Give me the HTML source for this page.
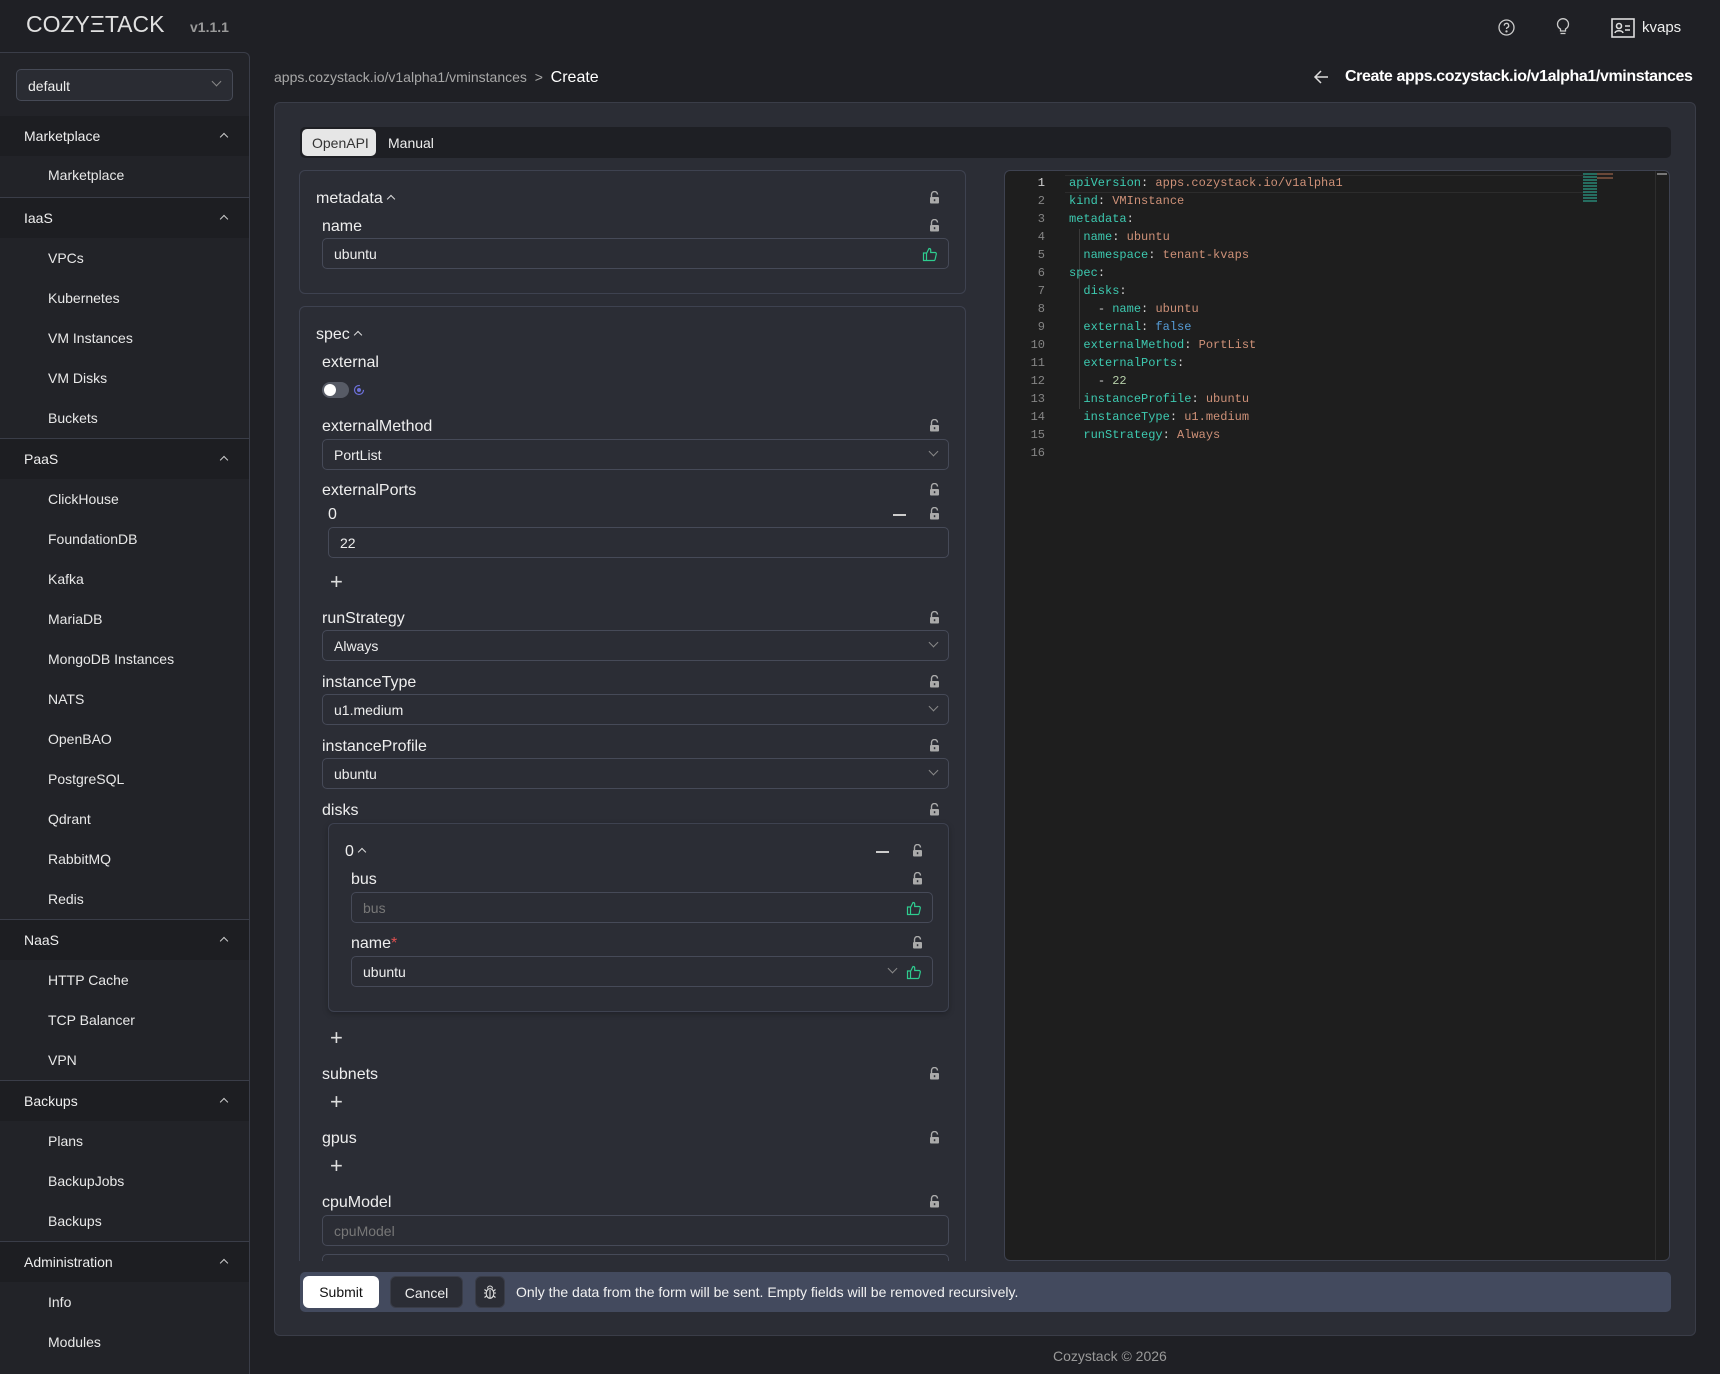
<!DOCTYPE html>
<html><head><meta charset="utf-8">
<style>
*{box-sizing:border-box;margin:0;padding:0}
html,body{width:1720px;height:1374px;overflow:hidden;background:#1f2025;font-family:"Liberation Sans",sans-serif;color:#e6e6e6}
.a{position:absolute}
.logo{left:26px;top:11px;font-size:23px;letter-spacing:0;color:#e0e0e0;font-weight:300}
.ver{left:190px;top:19px;font-size:14px;font-weight:bold;color:#9a9a9a}
.side{left:0;top:52px;width:250px;height:1322px;background:#222328;border-right:1px solid #3a3d48;border-top:1px solid #3a3d48;border-top-right-radius:6px}
.sel{left:16px;top:16px;width:217px;height:32px;border:1px solid #464a56;border-radius:5px;background:#2a2c33;font-size:14px;padding:8px 11px;color:#eee}
.gh{position:absolute;left:0;width:249px;height:40px;background:#1d1e22;font-size:14px;padding:12px 24px;color:#eee}
.gh:after{content:"";position:absolute;right:22px;top:18px;width:5px;height:5px;border-left:1.3px solid #ccc;border-top:1.3px solid #ccc;transform:rotate(45deg)}
.it{position:absolute;left:48px;font-size:14px;color:#e8e8e8}
.sep{position:absolute;left:0;width:249px;height:1px;background:#3a3d48}
.card{left:274px;top:102px;width:1422px;height:1234px;background:#2b2d35;border:1px solid #3a3d48;border-radius:6px}
.tabs{left:300px;top:127px;width:1371px;height:31px;background:#1e1f24;border-radius:5px}
.box{position:absolute;border:1px solid #3e4250;border-radius:6px;background:#2b2d35}
.lb{position:absolute;font-size:16px;color:#eee}
.up{display:inline-block;width:6px;height:6px;border-left:1.2px solid #ddd;border-top:1.2px solid #ddd;transform:rotate(45deg);margin-left:5px;vertical-align:1px}
.inp{position:absolute;height:31px;border:1px solid #464a58;border-radius:5px;background:#2b2d35;font-size:14px;padding:7px 11px;color:#eee}
.ph{color:#777}
.chev{position:absolute;right:11px;top:8px;width:7px;height:7px;border-right:1px solid #888;border-bottom:1px solid #888;transform:rotate(45deg)}
.lock{position:absolute;width:11px;height:13px}
.plus{position:absolute;font-size:22px;color:#ddd;font-weight:300}
.ed{left:1004px;top:170px;width:666px;height:1091px;background:#1e1e1e;border:1px solid #3e4250;border-radius:6px;overflow:hidden}
.code{position:absolute;left:0;top:3px;font-family:"Liberation Mono",monospace;font-size:12px;line-height:18px;white-space:pre}
.ln{position:absolute;left:0;width:40px;text-align:right;color:#858585}
.k{color:#3dc9b0}.s{color:#ce9178}.b{color:#569cd6}.n{color:#b5cea8}.p{color:#d4d4d4}
.bar{left:300px;top:1272px;width:1371px;height:40px;background:#434a5e;border-radius:5px}
.btn{position:absolute;top:4px;height:32px;border-radius:6px;font-size:14px;text-align:center;padding-top:8px}
</style></head><body>
<div class="a logo">COZY<span>Ξ</span>TACK</div>
<div class="a ver">v1.1.1</div>
<svg class="a" style="left:1498px;top:19px" width="17" height="17" viewBox="0 0 17 17" fill="none" stroke="#ccc" stroke-width="1.3"><circle cx="8.5" cy="8.5" r="7.5"/><path d="M6.3 6.6a2.2 2.2 0 1 1 3 2c-.6.3-.8.7-.8 1.4"/><circle cx="8.5" cy="12.4" r=".5" fill="#ccc"/></svg>
<svg class="a" style="left:1556px;top:18px" width="14" height="19" viewBox="0 0 14 19" fill="none" stroke="#ccc" stroke-width="1.3"><path d="M4.5 13v-2C2.5 9.8 1.5 8 1.5 6.2a5.5 5.5 0 0 1 11 0c0 1.8-1 3.6-3 4.8v2zM4.5 15.5h5"/></svg>
<svg class="a" style="left:1611px;top:18px" width="24" height="20" viewBox="0 0 24 20" fill="none" stroke="#ddd" stroke-width="1.6"><rect x="1" y="1" width="22" height="18"/><circle cx="8" cy="8" r="2.5"/><path d="M4 15c.5-3 7.5-3 8 0M14 8h5M14 12h5"/></svg>
<div class="a" style="left:1642px;top:19px;font-size:15px;color:#eee">kvaps</div>

<div class="a side">
<div class="a sel">default<span class="chev" style="top:8px;right:12px"></span></div>
<div class="gh" style="top:63px">Marketplace</div>
<div class="it" style="top:114px">Marketplace</div>
<div class="sep" style="top:144px"></div>
<div class="gh" style="top:145px">IaaS</div>
<div class="it" style="top:197px">VPCs</div>
<div class="it" style="top:237px">Kubernetes</div>
<div class="it" style="top:277px">VM Instances</div>
<div class="it" style="top:317px">VM Disks</div>
<div class="it" style="top:357px">Buckets</div>
<div class="sep" style="top:385px"></div>
<div class="gh" style="top:386px">PaaS</div>
<div class="it" style="top:438px">ClickHouse</div>
<div class="it" style="top:478px">FoundationDB</div>
<div class="it" style="top:518px">Kafka</div>
<div class="it" style="top:558px">MariaDB</div>
<div class="it" style="top:598px">MongoDB Instances</div>
<div class="it" style="top:638px">NATS</div>
<div class="it" style="top:678px">OpenBAO</div>
<div class="it" style="top:718px">PostgreSQL</div>
<div class="it" style="top:758px">Qdrant</div>
<div class="it" style="top:798px">RabbitMQ</div>
<div class="it" style="top:838px">Redis</div>
<div class="sep" style="top:866px"></div>
<div class="gh" style="top:867px">NaaS</div>
<div class="it" style="top:919px">HTTP Cache</div>
<div class="it" style="top:959px">TCP Balancer</div>
<div class="it" style="top:999px">VPN</div>
<div class="sep" style="top:1027px"></div>
<div class="gh" style="top:1028px">Backups</div>
<div class="it" style="top:1080px">Plans</div>
<div class="it" style="top:1120px">BackupJobs</div>
<div class="it" style="top:1160px">Backups</div>
<div class="sep" style="top:1188px"></div>
<div class="gh" style="top:1189px">Administration</div>
<div class="it" style="top:1241px">Info</div>
<div class="it" style="top:1281px">Modules</div>
</div>

<div class="a" style="left:274px;top:69px;font-size:14px;color:#a8a8a8">apps.cozystack.io/v1alpha1/vminstances&nbsp;&nbsp;&gt;&nbsp;&nbsp;<span style="color:#fff;font-size:16px">Create</span></div>
<svg class="a" style="left:1313px;top:69px" width="16" height="16" viewBox="0 0 16 16" fill="none" stroke="#ddd" stroke-width="1.5"><path d="M15 8H2M8 2L2 8l6 6"/></svg>
<div class="a" style="left:1345px;top:68px;font-size:16px;font-weight:bold;color:#fff;letter-spacing:-0.4px">Create apps.cozystack.io/v1alpha1/vminstances</div>

<div class="a card"></div>
<div class="a tabs">
<div class="a" style="left:2px;top:2px;width:74px;height:27px;background:#e6e6e6;border-radius:5px;color:#333;font-size:14px;padding:6px 0 0 10px">OpenAPI</div>
<div class="a" style="left:88px;top:8px;font-size:14px;color:#eee">Manual</div>
</div>

<svg width="0" height="0" style="position:absolute"><defs>
<symbol id="lk" viewBox="0 0 11 13"><path d="M2.5 6V3.5a3 3 0 0 1 6 0" fill="none" stroke="#aaa" stroke-width="1.4"/><rect x="1" y="6" width="9" height="6.5" rx="1" fill="#aaa"/><rect x="4.8" y="8.2" width="1.5" height="2" fill="#2b2d35"/></symbol>
<symbol id="th" viewBox="0 0 16 16"><path d="M1.5 7h3v7.5h-3zM4.5 7.5L7 2.5c1 0 1.7.6 1.7 1.6V6.5h4.3c.9 0 1.5.8 1.3 1.6l-1.2 5.3c-.2.7-.7 1.1-1.4 1.1H4.5" fill="none" stroke="#2ecc8f" stroke-width="1.2"/></symbol>
</defs></svg>

<div class="a" style="left:299px;top:170px;width:668px;height:1091px;overflow:hidden">
<div class="box" style="left:0;top:0;width:667px;height:124px"></div>
<div class="box" style="left:0;top:136px;width:667px;height:1000px"></div>
</div>
<div class="a" style="left:0;top:0;width:1720px;height:1261px;overflow:hidden;pointer-events:none">
<div class="lb" style="left:316px;top:190px">metadata<span class="up"></span></div>
<svg class="lock" style="left:929px;top:191px"><use href="#lk"/></svg>
<div class="lb" style="left:322px;top:218px">name</div>
<svg class="lock" style="left:929px;top:219px"><use href="#lk"/></svg>
<div class="inp" style="left:322px;top:238px;width:627px">ubuntu<svg class="a" style="right:10px;top:7px" width="16" height="16"><use href="#th"/></svg></div>

<div class="lb" style="left:316px;top:326px">spec<span class="up"></span></div>
<div class="lb" style="left:322px;top:354px">external</div>
<div class="a" style="left:322px;top:382px;width:27px;height:16px;border-radius:8px;background:#575b66"></div>
<div class="a" style="left:324px;top:384px;width:12px;height:12px;border-radius:6px;background:#fff"></div>
<svg class="a" style="left:353px;top:384px" width="12" height="12"><circle cx="6" cy="6" r="4.5" fill="none" stroke="#6c6fd8" stroke-width="1.2" stroke-dasharray="22 6"/><circle cx="6" cy="6" r="2" fill="#6c6fd8"/></svg>

<div class="lb" style="left:322px;top:418px">externalMethod</div>
<svg class="lock" style="left:929px;top:419px"><use href="#lk"/></svg>
<div class="inp" style="left:322px;top:439px;width:627px">PortList<span class="chev"></span></div>
<div class="lb" style="left:322px;top:482px">externalPorts</div>
<svg class="lock" style="left:929px;top:483px"><use href="#lk"/></svg>
<div class="lb" style="left:328px;top:506px">0</div>
<div class="a" style="left:893px;top:514px;width:13px;height:1.5px;background:#ccc"></div>
<svg class="lock" style="left:929px;top:507px"><use href="#lk"/></svg>
<div class="inp" style="left:328px;top:527px;width:621px">22</div>
<div class="plus" style="left:330px;top:569px">+</div>

<div class="lb" style="left:322px;top:610px">runStrategy</div>
<svg class="lock" style="left:929px;top:611px"><use href="#lk"/></svg>
<div class="inp" style="left:322px;top:630px;width:627px">Always<span class="chev"></span></div>
<div class="lb" style="left:322px;top:674px">instanceType</div>
<svg class="lock" style="left:929px;top:675px"><use href="#lk"/></svg>
<div class="inp" style="left:322px;top:694px;width:627px">u1.medium<span class="chev"></span></div>
<div class="lb" style="left:322px;top:738px">instanceProfile</div>
<svg class="lock" style="left:929px;top:739px"><use href="#lk"/></svg>
<div class="inp" style="left:322px;top:758px;width:627px">ubuntu<span class="chev"></span></div>
<div class="lb" style="left:322px;top:802px">disks</div>
<svg class="lock" style="left:929px;top:803px"><use href="#lk"/></svg>
<div class="box" style="left:328px;top:823px;width:621px;height:189px;box-shadow:0 2px 6px rgba(0,0,0,.25)"></div>
<div class="lb" style="left:345px;top:843px">0<span class="up"></span></div>
<div class="a" style="left:876px;top:851px;width:13px;height:1.5px;background:#ccc"></div>
<svg class="lock" style="left:912px;top:844px"><use href="#lk"/></svg>
<div class="lb" style="left:351px;top:871px">bus</div>
<svg class="lock" style="left:912px;top:872px"><use href="#lk"/></svg>
<div class="inp" style="left:351px;top:892px;width:582px"><span class="ph">bus</span><svg class="a" style="right:10px;top:7px" width="16" height="16"><use href="#th"/></svg></div>
<div class="lb" style="left:351px;top:935px">name<span style="color:#e05050">*</span></div>
<svg class="lock" style="left:912px;top:936px"><use href="#lk"/></svg>
<div class="inp" style="left:351px;top:956px;width:582px">ubuntu<span class="chev" style="right:36px"></span><svg class="a" style="right:10px;top:7px" width="16" height="16"><use href="#th"/></svg></div>
<div class="plus" style="left:330px;top:1025px">+</div>
<div class="lb" style="left:322px;top:1066px">subnets</div>
<svg class="lock" style="left:929px;top:1067px"><use href="#lk"/></svg>
<div class="plus" style="left:330px;top:1089px">+</div>
<div class="lb" style="left:322px;top:1130px">gpus</div>
<svg class="lock" style="left:929px;top:1131px"><use href="#lk"/></svg>
<div class="plus" style="left:330px;top:1153px">+</div>
<div class="lb" style="left:322px;top:1194px">cpuModel</div>
<svg class="lock" style="left:929px;top:1195px"><use href="#lk"/></svg>
<div class="inp" style="left:322px;top:1215px;width:627px"><span class="ph">cpuModel</span></div>
<div class="inp" style="left:322px;top:1254px;width:627px"></div>
</div>

<div class="a ed">
<div class="a" style="left:60px;top:4px;width:520px;height:18px;border-top:1px solid #2c2c2c;border-bottom:1px solid #2c2c2c"></div>
<div class="a" style="left:74px;top:58px;width:1px;height:36px;background:#3a3a3a"></div>
<div class="a" style="left:74px;top:94px;width:1px;height:144px;background:#3a3a3a"></div>
<div class="ln code">1
2
3
4
5
6
7
8
9
10
11
12
13
14
15
16</div>
<div class="ln code" style="color:#c6c6c6">1</div>
<div class="code" style="left:64px"><span class="k">apiVersion</span><span class="p">: </span><span class="s">apps.cozystack.io/v1alpha1</span>
<span class="k">kind</span><span class="p">: </span><span class="s">VMInstance</span>
<span class="k">metadata</span><span class="p">:</span>
  <span class="k">name</span><span class="p">: </span><span class="s">ubuntu</span>
  <span class="k">namespace</span><span class="p">: </span><span class="s">tenant-kvaps</span>
<span class="k">spec</span><span class="p">:</span>
  <span class="k">disks</span><span class="p">:</span>
    <span class="p">- </span><span class="k">name</span><span class="p">: </span><span class="s">ubuntu</span>
  <span class="k">external</span><span class="p">: </span><span class="b">false</span>
  <span class="k">externalMethod</span><span class="p">: </span><span class="s">PortList</span>
  <span class="k">externalPorts</span><span class="p">:</span>
    <span class="p">- </span><span class="n">22</span>
  <span class="k">instanceProfile</span><span class="p">: </span><span class="s">ubuntu</span>
  <span class="k">instanceType</span><span class="p">: </span><span class="s">u1.medium</span>
  <span class="k">runStrategy</span><span class="p">: </span><span class="s">Always</span>
</div>
<div class="a" style="left:578px;top:2px;width:14px;height:30px;background:repeating-linear-gradient(#2a8f7d 0 2px,transparent 2px 3px);opacity:.7"></div>
<div class="a" style="left:592px;top:2px;width:16px;height:8px;background:repeating-linear-gradient(#8a5a44 0 2px,transparent 2px 4px);opacity:.7"></div>
<div class="a" style="left:650px;top:0;width:1px;height:1091px;background:#2e2e2e"></div>
<div class="a" style="left:652px;top:2px;width:10px;height:2px;background:#777"></div>
</div>

<div class="a bar">
<div class="btn" style="left:3px;width:76px;background:#fff;color:#111">Submit</div>
<div class="btn" style="left:90px;width:73px;background:#2b2d35;border:1px solid #3a3d48;color:#eee">Cancel</div>
<div class="btn" style="left:175px;width:30px;background:#2b2d35;border:1px solid #3a3d48;padding-top:7px"><svg width="14" height="16" viewBox="0 0 14 16" fill="none" stroke="#ddd" stroke-width="1.1"><ellipse cx="7" cy="9.5" rx="3.8" ry="4.8"/><path d="M4.5 4.5a2.5 2.5 0 0 1 5 0M1 9h2.2M10.8 9H13M1.5 5.5l2 1.5M12.5 5.5l-2 1.5M1.5 13.5l2-1.5M12.5 13.5l-2-1.5M7 6v8"/></svg></div>
<div class="a" style="left:216px;top:12px;font-size:14px;color:#f2f2f2">Only the data from the form will be sent. Empty fields will be removed recursively.</div>
</div>

<div class="a" style="left:1053px;top:1348px;font-size:14px;color:#9a9a9a">Cozystack © 2026</div>
</body></html>
